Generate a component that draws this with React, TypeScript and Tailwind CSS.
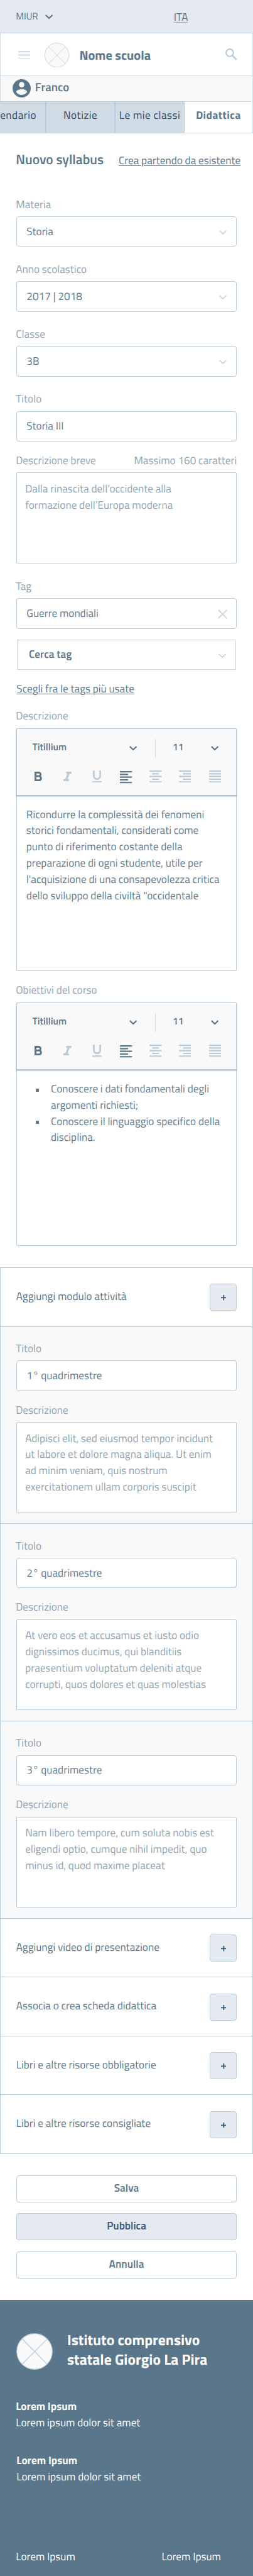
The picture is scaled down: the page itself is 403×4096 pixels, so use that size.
import type { ReactNode } from "react";

/* The spacing unit is redefined on the root so that one unit equals one pixel of the 750px-wide design. */

function Chevron({ className = "", stroke = 4 }: { className?: string; stroke?: number }) {
  return (
    <svg viewBox="0 0 23 14" className={`h-14 w-23 shrink-0 ${className}`} fill="none" stroke="currentColor" strokeWidth={stroke}>
      <path d="M1.5 1.8 11.5 11.3 21.5 1.8" />
    </svg>
  );
}

function Crest({ className = "" }: { className?: string }) {
  return (
    <svg viewBox="0 0 73 73" className={`shrink-0 ${className}`} fill="#f9f9f9" stroke="#b9ccdb" strokeWidth="1.5">
      <circle cx="36.5" cy="36.5" r="35.6" />
      <path d="M11.5 11 62 62M62 11.500 11.5 62" />
    </svg>
  );
}

function Label({ children, className = "" }: { children: ReactNode; className?: string }) {
  return <div className={`-mb-1.5 -ml-1 flex justify-between pt-1.5 leading-48 text-[#90a4b4] ${className}`}>{children}</div>;
}

function InputBox({ children, icon }: { children: ReactNode; icon?: ReactNode }) {
  return (
    <div className="mt-12 flex h-90 items-center justify-between rounded-[4px] border border-[#b9ccdb] bg-white pt-1 pr-28 pl-29 text-[#5f7c91]">
      <span className="leading-48">{children}</span>
      {icon}
    </div>
  );
}

function TextBox({ children }: { children: string }) {
  return (
    <div className="mt-12 h-269 rounded-[2px] border border-[#b9ccdb] bg-white pt-23.5 pl-25 leading-48 whitespace-pre text-[#90a4b4]">
      {children}
    </div>
  );
}

function Lines({ d, className }: { d: string; className: string }) {
  return (
    <svg viewBox="0 0 36 36" className={`size-36 shrink-0 ${className}`} stroke="currentColor" strokeWidth="4" fill="none">
      <path d={d} />
    </svg>
  );
}

function Toolbar() {
  return (
    <div className="-mx-[1px] -mt-[1px] h-200 rounded-t-[2px] border border-[#b9ccdb] bg-[#f9f9f9] text-[#5a768a] shadow-[0_1px_2px_rgba(0,0,0,0.45)]">
      <div className="mt-30 flex h-56 items-center text-[15.6px] font-semibold">
        <span className="w-286 pb-3 pl-46 leading-48">Titillium</span>
        <Chevron className="ml-47" />
        <span className="ml-54 h-56 w-2 bg-[#d9dcdf]" />
        <span className="ml-50 w-40 pb-3 leading-48">11</span>
        <Chevron className="ml-73" />
      </div>
      <div className="mt-38 flex h-36 items-start">
        <svg viewBox="0 0 22 28" className="mt-3 ml-52 h-28 w-22" fill="none" stroke="currentColor" strokeWidth="5.400">
          <path d="M2.700 0V28M0 2.700H12.500a5.200 5.200 0 0 1 0 10.800H3M3 13.700H13.500a5.800 5.800 0 0 1 0 11.600H0" />
        </svg>
        <svg viewBox="0 0 24 28" className="mt-3 ml-64 h-28 w-24 text-[#b9ccdb]" fill="none" stroke="currentColor" strokeWidth="6">
          <path d="M8 3H24M0 25H16M16 3 8 25" />
        </svg>
        <svg viewBox="0 0 28 36" className="ml-62 h-36 w-28 text-[#b9ccdb]" fill="none" stroke="currentColor">
          <path strokeWidth="5" d="M4.500 0V16a9.500 9.500 0 0 0 19 0V0" />
          <path strokeWidth="4" d="M0 34H28" />
        </svg>
        <Lines className="mt-2 ml-54" d="M0 2H36M0 10H24M0 18H36M0 26H24M0 34H36" />
        <Lines className="ml-52 text-[#b9ccdb]" d="M0 2H36M8 10H28M0 18H36M8 26H28M0 34H36" />
        <Lines className="ml-50 text-[#b9ccdb]" d="M0 2H36M12 10H36M0 18H36M12 26H36M0 34H36" />
        <Lines className="ml-54 text-[#b9ccdb]" d="M0 2H36M0 10H36M0 18H36M0 26H36M0 34H36" />
      </div>
    </div>
  );
}

function Editor({ children }: { children: ReactNode }) {
  return (
    <div className="mt-12 h-720 rounded-[2px] border border-[#b9ccdb] bg-white text-[#5f7c91]">
      <Toolbar />
      <div className="pt-33 pl-28 leading-48">{children}</div>
    </div>
  );
}

function AddRow({ title }: { title: string }) {
  return (
    <div className="flex h-174 items-center justify-between border-b border-[#b9ccdb] pr-46 pl-46">
      <span className="pb-2 leading-48 text-[#5a768a]">{title}</span>
      <button className="mt-2 flex size-80 items-center justify-center rounded-[4px] border border-[#b9ccdb] bg-[#e5e9f0]">
        <svg viewBox="0 0 16 16" className="mt-3 size-16" stroke="#37597a" strokeWidth="3.300">
          <path d="M8 0V16M0 8H16" />
        </svg>
      </button>
    </div>
  );
}

function Module({ title, text }: { title: string; text: string }) {
  return (
    <div className="h-584 border-b border-[#b9ccdb] bg-[#f9f9f9] px-46 pt-40">
      <Label>Titolo</Label>
      <InputBox>{title}</InputBox>
      <Label className="mt-32">Descrizione</Label>
      <TextBox>{text}</TextBox>
    </div>
  );
}

const selects = [
  { label: "Materia", value: "Storia" },
  { label: "Anno scolastico", value: "2017 | 2018" },
  { label: "Classe", value: "3B" },
];

const modules = [
  {
    title: "1° quadrimestre",
    text: "Adipisci elit, sed eiusmod tempor incidunt\nut labore et dolore magna aliqua. Ut enim\nad minim veniam, quis nostrum\nexercitationem ullam corporis suscipit",
  },
  {
    title: "2° quadrimestre",
    text: "At vero eos et accusamus et iusto odio\ndignissimos ducimus, qui blanditiis\npraesentium voluptatum deleniti atque\ncorrupti, quos dolores et quas molestias",
  },
  {
    title: "3° quadrimestre",
    text: "Nam libero tempore, cum soluta nobis est\neligendi optio, cumque nihil impedit, quo\nminus id, quod maxime placeat",
  },
];

const goals = [
  "Conoscere i dati fondamentali degli\nargomenti richiesti;",
  "Conoscere il linguaggio specifico della\ndisciplina.",
];

const tab = "flex h-95 shrink-0 items-center justify-center border border-[#b9ccdb] bg-[#cfdbe5] pb-7 whitespace-nowrap text-[#34495e]";
const action = "flex h-80 w-full items-center justify-center rounded-[4px] border border-[#b9ccdb] pb-2 font-semibold";

export default function App() {
  return (
    <div className="h-[4096px] w-[403px] overflow-hidden bg-white font-['Titillium_Web','Roboto',sans-serif] text-[17.2px] text-[#5a768a] [--spacing:0.53733px] [text-rendering:geometricPrecision]">
      <div className="flex h-96 items-start bg-[#e5e9f1] pl-47">
        <div className="flex w-468 items-start">
          <span className="mt-27 w-87 text-[15.1px] leading-40">MIUR</span>
          <Chevron className="mt-43" />
        </div>
        <span className="mt-27 leading-48 underline decoration-[#8fa9b8] decoration-1 underline-offset-[2px]">ITA</span>
      </div>

      <header className="flex h-128 items-start border-x border-t border-[#cfdce6] pr-45 pl-52">
        <svg viewBox="0 0 36 24" className="mt-52 h-24 w-36 shrink-0" stroke="#cfdce6" strokeWidth="4">
          <path d="M0 2H36M0 12H36M0 22H36" />
        </svg>
        <Crest className="mt-29 ml-41.5 size-73" />
        <h1 className="mt-37 ml-31 text-[20.4px] leading-60 font-bold">Nome scuola</h1>
        <svg viewBox="0 0 35 35" className="mt-46 ml-auto size-35 shrink-0" fill="none" stroke="#b9ccdb">
          <circle cx="13" cy="13" r="10.800" strokeWidth="4" />
          <path strokeWidth="5" d="M22 22 33 33.500" />
        </svg>
      </header>

      <div className="flex h-75 items-start border-x border-t border-[#cfdce6] bg-[#f9f9f9] pl-35">
        <svg viewBox="2 2 20 20" className="mt-8 size-54 shrink-0" fill="currentColor">
          <path d="M12 2C6.480 2 2 6.480 2 12s4.480 10 10 10 10-4.480 10-10S17.520 2 12 2zm0 3c1.660 0 3 1.340 3 3s-1.340 3-3 3-3-1.340-3-3 1.340-3 3-3zm0 14.200c-2.500 0-4.710-1.280-6-3.220.030-1.990 4-3.080 6-3.080 1.990 0 5.970 1.090 6 3.080-1.290 1.940-3.500 3.220-6 3.220z" />
        </svg>
        <span className="mt-9.5 ml-13 text-[18.8px] leading-50 font-semibold">Franco</span>
      </div>

      <nav className="flex tracking-[0.5px]">
        <div className={`${tab} w-136 border-l-0 pr-26`}>
          <span className="w-108 text-right">endario</span>
        </div>
        <div className={`${tab} w-205`}>Notizie</div>
        <div className={`${tab} w-206`}>Le mie classi</div>
        <div className="flex h-95 w-203 items-center justify-center border-y border-r border-[#cfdce6] bg-white pb-7 font-bold">Didattica</div>
      </nav>

      <div className="mt-48.5 flex items-baseline justify-between pr-37 pl-47">
        <h2 className="text-[21.5px] leading-60 font-semibold">Nuovo syllabus</h2>
        <a className="leading-48 underline decoration-1 underline-offset-[2px]">Crea partendo da esistente</a>
      </div>

      <main className="px-48 pt-78">
        {selects.map((s) => (
          <div key={s.label} className="h-192">
            <Label>{s.label}</Label>
            <InputBox icon={<Chevron className="mt-3 text-[#cfdce6]" />}>{s.value}</InputBox>
          </div>
        ))}
        <Label>Titolo</Label>
        <InputBox>Storia III</InputBox>

        <Label className="mt-32">
          <span>Descrizione breve</span>
          <span>Massimo 160 caratteri</span>
        </Label>
        <TextBox>{"Dalla rinascita dell’occidente alla\nformazione dell’Europa moderna"}</TextBox>

        <Label className="mt-43">Tag</Label>
        <InputBox
          icon={
            <svg viewBox="0 0 28 28" className="mt-2 -mr-2 size-28" stroke="#cfdce6" strokeWidth="4">
              <path d="M1.500 1.500 26.500 26.500M26.500 1.500 1.500 26.500" />
            </svg>
          }
        >
          Guerre mondiali
        </InputBox>
        <div className="mx-2 mt-32 flex h-90 items-center justify-between rounded-t-[2px] border border-[#c6d6e2] pt-1 pr-28 pl-34">
          <span className="leading-48 font-semibold">Cerca tag</span>
          <Chevron className="mt-4 text-[#b9ccdb]" stroke={2.5} />
        </div>
        <a className="mt-33 -mb-1 ml-1 block leading-48 underline decoration-1 underline-offset-[2px]">Scegli fra le tags più usate</a>

        <Label className="mt-32">Descrizione</Label>
        <Editor>
          <p className="whitespace-pre">
            {"Ricondurre la complessità dei fenomeni\nstorici fondamentali, considerati come\npunto di riferimento costante della\npreparazione di ogni studente, utile per\nl'acquisizione di una consapevolezza critica\ndello sviluppo della civiltà \"occidentale"}
          </p>
        </Editor>

        <Label className="mt-32">Obiettivi del corso</Label>
        <Editor>
          <ul>
            {goals.map((g) => (
              <li key={g} className="flex whitespace-pre">
                <span className="mt-22 mr-36 ml-28 size-9 bg-[#5f7c91]" />
                {g}
              </li>
            ))}
          </ul>
        </Editor>
      </main>

      <section className="mt-64 border-x border-t border-[#b9ccdb]">
        <AddRow title="Aggiungi modulo attività" />
        {modules.map((m) => (
          <Module key={m.title} {...m} />
        ))}
        <AddRow title="Aggiungi video di presentazione" />
        <AddRow title="Associa o crea scheda didattica" />
        <AddRow title="Libri e altre risorse obbligatorie" />
        <AddRow title="Libri e altre risorse consigliate" />
      </section>

      <div className="mt-64 flex flex-col gap-32 px-48">
        <button className={action}>Salva</button>
        <button className={`${action} bg-[#e5e9f0] text-[#37597a]`}>Pubblica</button>
        <button className={action}>Annulla</button>
      </div>

      <footer className="mt-64 h-820 bg-[#5a768a] pt-90 pl-47 text-white">
        <div className="flex items-start">
          <Crest className="mt-8 ml-2 size-108" />
          <p className="mt-1 -mb-1 ml-42 text-[23.6px] leading-58 font-bold">
            Istituto comprensivo
            <br />
            statale Giorgio La Pira
          </p>
        </div>
        <div className="mt-86 leading-48">
          <p className="font-bold">Lorem Ipsum</p>
          <p>Lorem ipsum dolor sit amet</p>
        </div>
        <div className="mt-65 ml-2 leading-48">
          <p className="font-bold">Lorem Ipsum</p>
          <p>Lorem ipsum dolor sit amet</p>
        </div>
        <div className="mt-188 flex leading-48">
          <span className="w-432">Lorem Ipsum</span>
          <span>Lorem Ipsum</span>
        </div>
      </footer>
    </div>
  );
}
